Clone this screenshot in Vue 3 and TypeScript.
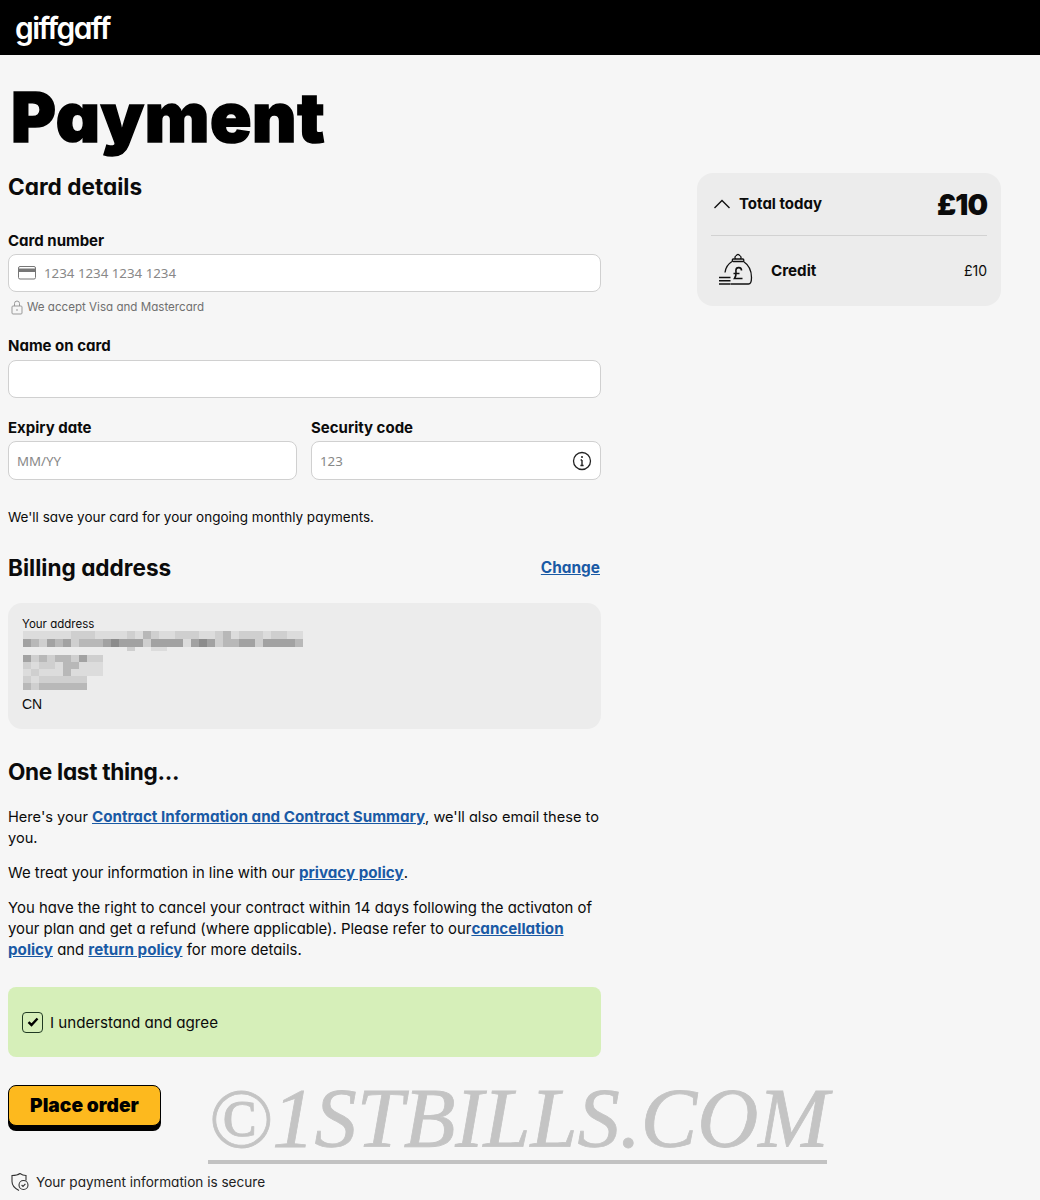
<template>
  <div class="page">
    <header class="topbar">
      <span class="logo">giffgaff</span>
    </header>

    <main class="content">
      <h1 class="title">Payment</h1>

      <div class="columns">
        <section class="form">
          <h2 class="heading">Card details</h2>

          <label class="label label-first">Card number</label>
          <div class="input">
            <svg class="card-icon" width="18" height="14" viewBox="0 0 18 14">
              <rect x="0.5" y="0.5" width="17" height="12.5" rx="1.5" fill="none" stroke="#777" />
              <rect x="0.5" y="2.5" width="17" height="3.5" fill="#777" />
            </svg>
            <span class="placeholder">1234 1234 1234 1234</span>
          </div>
          <div class="hint">
            <svg width="14" height="15" viewBox="0 0 14 15" fill="none" stroke="#999">
              <rect x="2" y="6" width="10" height="8" rx="1" />
              <path d="M4.5 6V3.5a2.5 2.5 0 0 1 5 0V6M7 9v2" />
            </svg>
            <span>We accept Visa and Mastercard</span>
          </div>

          <label class="label label-name">Name on card</label>
          <div class="input"></div>

          <div class="split">
            <div>
              <label class="label">Expiry date</label>
              <div class="input input-short"><span class="placeholder">MM/YY</span></div>
            </div>
            <div>
              <label class="label">Security code</label>
              <div class="input input-short">
                <span class="placeholder">123</span>
                <svg class="info" width="20" height="20" viewBox="0 0 20 20" fill="none" stroke="#222">
                  <circle cx="10" cy="10" r="8.5" stroke-width="1.3" />
                  <path d="M10 9v5.5M8.4 14.5h3.2M8.6 9H10" stroke-width="1.4" />
                  <circle cx="10" cy="6" r="1" fill="#222" stroke="none" />
                </svg>
              </div>
            </div>
          </div>

          <p class="save">We'll save your card for your ongoing monthly payments.</p>

          <div class="billing-head">
            <h2 class="heading">Billing address</h2>
            <a class="link change" href="#">Change</a>
          </div>

          <div class="address">
            <div class="address-label">Your address</div>
            <div
              v-for="(row, r) in blurRows"
              :key="r"
              class="blur-row"
              :style="{ height: row.height + 'px', marginBottom: row.gap + 'px' }"
            >
              <span
                v-for="(shade, c) in row.cells"
                :key="c"
                class="blur-cell"
                :style="{ background: shade }"
              ></span>
            </div>
            <div class="address-country">CN</div>
          </div>

          <h2 class="heading last-thing">One last thing...</h2>

          <p class="para para-first">
            Here's your <a class="link" href="#">Contract Information and Contract Summary</a>, we'll also email these to you.
          </p>
          <p class="para">
            We treat your information in line with our <a class="link" href="#">privacy policy</a>.
          </p>
          <p class="para">
            You have the right to cancel your contract within 14 days following the activaton of your plan and get a refund (where applicable). Please refer to our<a class="link" href="#">cancellation policy</a> and <a class="link" href="#">return policy</a> for more details.
          </p>

          <div class="agree">
            <span class="checkbox">
              <svg width="12" height="10" viewBox="0 0 12 10">
                <path d="M1.5 5.2 4.500 8 10.500 1.500" fill="none" stroke="#000" stroke-width="2.4" />
              </svg>
            </span>
            <span>I understand and agree</span>
          </div>

          <button class="order" type="button">Place order</button>

          <div class="secure">
            <svg width="20" height="20" viewBox="0 0 20 20" fill="none" stroke="#333" stroke-width="1.1">
              <path d="M10 1.500c2 1.500 4 2 6 2v5M10 1.500c-2 1.500-5 2-8 2v6c0 4 3 7 7 9" />
              <circle cx="13.500" cy="13" r="4.500" />
              <path d="M11.600 13l1.400 1.400 2.400-2.600" />
            </svg>
            <span>Your payment information is secure</span>
          </div>
        </section>

        <aside class="summary">
          <div class="total">
            <svg class="chevron" width="18" height="10" viewBox="0 0 18 10" fill="none" stroke="#111" stroke-width="1.4">
              <path d="M1.500 9 9 1.500 16.500 9" />
            </svg>
            <span class="total-label">Total today</span>
            <span class="total-price">£10</span>
          </div>
          <div class="item">
            <svg class="bag" width="36" height="34" viewBox="0 0 36 34" fill="none" stroke="#111" stroke-width="1.3">
              <path d="M17.500 6c-1-1.500-.5-3 1-3.500.5-1.500 2.500-1.500 3 0 1.500.5 2 2 1 3.500" />
              <rect x="14.300" y="6" width="11.500" height="2.500" rx="1" />
              <path d="M14 8.500C10 11 7.500 15 7 19.500M25.500 8.500c4.500 3 8 9 8 16 0 4-1 6.500-3 6.500H12.700" />
              <path d="M1 24.500h11.500M1 27.800h11.500M1 31h11.500" stroke-width="1.6" />
              <path d="M23.500 17.500a2.800 2.800 0 0 0-5.600-.2c0 2.700 1 4.500-1.400 8.200h8M15.500 20.500h6" stroke-width="1.6" />
            </svg>
            <span class="item-label">Credit</span>
            <span class="item-price">£10</span>
          </div>
        </aside>
      </div>
    </main>

    <div class="watermark">©1STBILLS.COM</div>
  </div>
</template>

<script setup lang="ts">
interface BlurRow {
  height: number;
  gap: number;
  cells: string[];
}

const shades = ['transparent', '#dcdcdc', '#cfcfcf', '#b8b8b8', '#a2a2a2', '#8c8c8c'];

// the address is pixelated in the source, so the rows are just flat tinted cells
const rows: [number, number, number[]][] = [
  [8, 0, [1,1,1,1,1,1,2,2,2,1,1,1,1,2,1,3,2,1,1,2,2,2,1,1,2,3,1,2,2,2,1,2,2,1,1]],
  [8, 0, [4,3,2,4,3,4,2,3,3,3,4,5,4,4,4,2,4,4,4,4,1,4,5,4,2,3,3,4,4,2,4,4,4,4,3]],
  [4, 4, [0,0,0,0,0,0,0,0,0,0,0,0,0,2,0,0,1,1,0,0,0,0,0,0,0,0,0,0,0,0,0,0,0,0,0]],
  [7, 0, [4,2,3,2,3,3,2,4,2,2]],
  [7, 0, [2,1,2,2,1,3,3,1,1,1]],
  [7, 0, [1,2,1,1,1,3,1,1,1,1]],
  [7, 0, [2,1,2,2,2,2,2,2,0,0]],
  [7, 0, [3,2,3,3,3,3,3,3,0,0]],
];

const blurRows: BlurRow[] = rows.map(([height, gap, row]) => ({
  height,
  gap,
  cells: row.map((v) => shades[v]),
}));
</script>

<style>
html,
body {
  margin: 0;
  background: #f6f6f6;
}
</style>

<style scoped>
.page {
  position: relative;
  height: 1200px;
  overflow: hidden;
  background: #f6f6f6;
  color: #0b0b0b;
  font-family: Inter, 'Noto Sans', sans-serif;
  font-feature-settings: 'cv11';
}

.topbar {
  display: flex;
  align-items: center;
  height: 55px;
  padding-left: 15px;
  background: #000;
}

.logo {
  color: #fff;
  font-size: 30px;
  font-weight: 600;
  letter-spacing: -1.6px;
  line-height: 48px;
}

.content {
  padding-left: 8px;
}

.title {
  margin: 25px 0 17px 3px;
  font-size: 68.5px;
  font-weight: 900;
  line-height: 76px;
  letter-spacing: 0.6px;
  color: #000;
  -webkit-text-stroke: 1.5px #000;
}

.columns {
  display: flex;
  align-items: flex-start;
}

.form {
  width: 593px;
  flex: none;
}

.heading {
  margin: 0;
  font-size: 22.6px;
  font-weight: 700;
  line-height: 28px;
}

.label {
  display: block;
  height: 22px;
  font-size: 15px;
  font-weight: 700;
  line-height: 22px;
}

.label-first {
  margin-top: 29px;
  margin-bottom: 2px;
}

.label-name {
  margin-top: 20px;
  margin-bottom: 3px;
}

.input {
  display: flex;
  align-items: center;
  box-sizing: border-box;
  height: 38px;
  padding: 0 8px;
  background: #fff;
  border: 1px solid #d0d0d0;
  border-radius: 8px;
}

.input-short {
  height: 39px;
  justify-content: space-between;
}

.card-icon {
  margin-left: 1px;
  margin-right: 8px;
  flex: none;
}

.placeholder {
  color: #888;
  font-family: 'Noto Sans', sans-serif;
  font-size: 13.3px;
}

.hint {
  display: flex;
  align-items: center;
  gap: 3px;
  height: 16px;
  margin-top: 7px;
  padding-left: 2px;
  color: #707070;
  font-size: 11.6px;
}

.split {
  display: grid;
  grid-template-columns: 289px 290px;
  column-gap: 14px;
  margin-top: 19px;
}

.split .label {
  margin-bottom: 2px;
}

.save {
  margin: 27px 0 0;
  font-size: 13.5px;
  line-height: 20px;
}

.billing-head {
  display: flex;
  align-items: center;
  justify-content: space-between;
  margin-top: 27px;
}

.link {
  color: #1a5aa5;
  font-size: 15.2px;
  font-weight: 700;
  line-height: 1;
  text-decoration: underline;
}

.change {
  padding-right: 1px;
  font-size: 15.4px;
}

.address {
  box-sizing: border-box;
  height: 126px;
  margin-top: 21px;
  padding: 14px 15px 0;
  background: #ececec;
  border-radius: 14px;
  font-size: 11.5px;
}

.address-label {
  height: 14px;
  margin-left: -1px;
  line-height: 14px;
}

.blur-row {
  display: flex;
}

.blur-cell {
  width: 8px;
  flex: none;
}

.address-country {
  margin-top: 5px;
  margin-left: -1px;
  font-family: 'Liberation Sans', sans-serif;
  font-size: 14px;
  line-height: 18px;
}

.last-thing {
  margin-top: 29px;
  letter-spacing: -0.3px;
}

.para {
  margin: 14px 0 0;
  font-size: 14.9px;
  line-height: 21px;
}

.para-first {
  margin-top: 21px;
  font-size: 14.6px;
}

.agree {
  display: flex;
  align-items: center;
  gap: 7px;
  box-sizing: border-box;
  height: 70px;
  margin-top: 26px;
  padding-left: 14px;
  background: #d6efb9;
  border-radius: 8px;
  font-size: 15.15px;
}

.checkbox {
  display: flex;
  align-items: center;
  justify-content: center;
  box-sizing: border-box;
  width: 21px;
  height: 21px;
  border: 1px solid #1f3a22;
  border-radius: 4px;
}

.order {
  display: block;
  box-sizing: border-box;
  width: 153px;
  height: 41px;
  margin-top: 28px;
  padding: 0 0 2px;
  background: #fdb91e;
  border: 1px solid #000;
  border-radius: 8px;
  box-shadow: 0 5px 0 #000;
  color: #000;
  font-family: inherit;
  font-feature-settings: normal;
  font-size: 19.2px;
  font-weight: 900;
}

.secure {
  display: flex;
  align-items: center;
  gap: 6px;
  margin-top: 46px;
  padding-left: 2px;
  color: #222;
  font-size: 13.6px;
}

.summary {
  box-sizing: border-box;
  width: 304px;
  height: 133px;
  margin-left: 96px;
  padding: 0 14px;
  background: #ececec;
  border-radius: 16px;
}

.total {
  display: flex;
  align-items: center;
  height: 62px;
  border-bottom: 1px solid #d2d2d2;
}

.chevron {
  margin-left: 2px;
}

.total-label {
  margin-left: 8px;
  margin-bottom: 2px;
  font-size: 15px;
  font-weight: 700;
}

.total-price {
  margin-left: auto;
  font-size: 29px;
  font-weight: 900;
  letter-spacing: -1px;
}

.item {
  display: flex;
  align-items: center;
  box-sizing: border-box;
  height: 70px;
  padding-left: 7px;
  padding-bottom: 2px;
}

.bag {
  flex: none;
}

.item-label {
  margin-left: 17px;
  font-size: 15.2px;
  font-weight: 700;
}

.item-price {
  margin-left: auto;
  font-size: 14px;
}

.watermark {
  position: absolute;
  left: 208px;
  top: 1078px;
  width: 619px;
  height: 82px;
  border-bottom: 4px solid #c2c2c2;
  color: #c4c4c4;
  font-family: 'Liberation Serif', serif;
  font-size: 84.5px;
  font-style: italic;
  line-height: 82px;
  white-space: nowrap;
  -webkit-text-stroke: 0.8px #c4c4c4;
}
</style>
